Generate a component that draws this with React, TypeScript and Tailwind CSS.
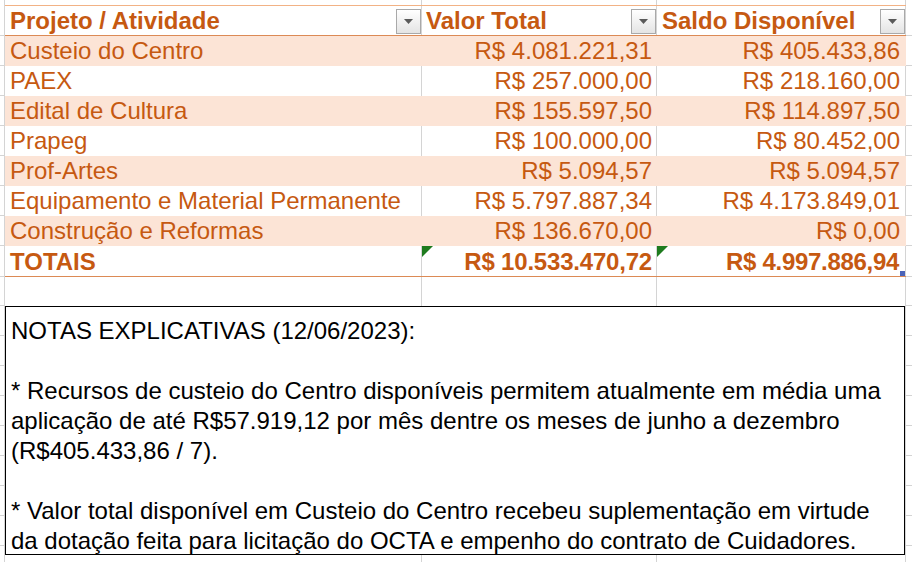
import React from "react";

const rows: [string, string, string][] = [
  ["Custeio do Centro", "R$ 4.081.221,31", "R$ 405.433,86"],
  ["PAEX", "R$ 257.000,00", "R$ 218.160,00"],
  ["Edital de Cultura", "R$ 155.597,50", "R$ 114.897,50"],
  ["Prapeg", "R$ 100.000,00", "R$ 80.452,00"],
  ["Prof-Artes", "R$ 5.094,57", "R$ 5.094,57"],
  ["Equipamento e Material Permanente", "R$ 5.797.887,34", "R$ 4.173.849,01"],
  ["Construção e Reformas", "R$ 136.670,00", "R$ 0,00"],
];

function Dropdown() {
  return (
    <div className="mt-[3px] self-start w-[25px] h-[25px] border border-[#a9a9a9] bg-linear-to-b from-white to-[#e4e4e4] flex items-center justify-center shrink-0">
      <svg width="9" height="5" viewBox="0 0 9 5">
        <path d="M0 0H9L4.5 5Z" fill="#5a5a5a" />
      </svg>
    </div>
  );
}

function GreenMark() {
  return (
    <svg className="absolute top-0 left-0" width="11" height="11" viewBox="0 0 11 11">
      <path d="M0 0H11L0 11Z" fill="#1e7b1e" />
    </svg>
  );
}

function Stubs({ n, right }: { n: number; right?: boolean }) {
  return (
    <div className={right ? "flex-1 flex flex-col" : "w-[5px] flex flex-col border-r border-[#d4d4d4]"}>
      {Array.from({ length: n }).map((_, i) => (
        <div key={i} className="h-[30px] shrink-0 border-b border-[#d4d4d4]" />
      ))}
    </div>
  );
}

export default function App() {
  return (
    <div className="w-[912px] h-[562px] bg-white overflow-hidden font-['Liberation_Sans',Arial,sans-serif] text-[24px]">
      {/* top strip */}
      <div className="flex h-[5px]">
        <div className="w-[5px] border-r border-[#d4d4d4]" />
        <div className="w-[417px] border-r border-[#d4d4d4]" />
        <div className="w-[235px] border-r border-[#d4d4d4]" />
        <div className="w-[249px] border-r border-[#d4d4d4]" />
        <div className="flex-1" />
      </div>

      {/* header */}
      <div className="flex h-[31px]">
        <div className="w-[5px] border-r border-b border-[#d4d4d4]" />
        <div className="flex w-[901px] border-y border-t-[#f2b285] border-b-[#dc8a55] text-[#c65911] font-bold">
          <div className="w-[417px] flex border-r border-[#d4d4d4] pl-[5px]">
            <span className="leading-[30px] whitespace-nowrap">Projeto / Atividade</span>
            <div className="ml-auto flex">
              <Dropdown />
            </div>
          </div>
          <div className="w-[235px] flex border-r border-[#d4d4d4] pl-[4px]">
            <span className="leading-[30px] whitespace-nowrap">Valor Total</span>
            <div className="ml-auto flex">
              <Dropdown />
            </div>
          </div>
          <div className="w-[249px] flex border-r border-[#d4d4d4] pl-[5px]">
            <span className="leading-[30px] whitespace-nowrap">Saldo Disponível</span>
            <div className="ml-auto flex">
              <Dropdown />
            </div>
          </div>
        </div>
        <div className="flex-1 border-b border-[#d4d4d4]" />
      </div>

      {/* data rows */}
      {rows.map(([a, b, c], i) => {
        const band = i % 2 === 0;
        const cell = band ? "bg-[#fce4d6] border-r border-[#fce4d6]" : "border-r border-[#d4d4d4]";
        return (
          <div key={a} className="flex h-[30px] text-[#c65911]">
            <div className="w-[5px] border-r border-b border-[#d4d4d4]" />
            <div className={`w-[417px] pl-[5px] leading-[30px] whitespace-nowrap ${cell}`}>{a}</div>
            <div className={`w-[235px] pr-[4px] text-right leading-[30px] whitespace-nowrap ${cell}`}>{b}</div>
            <div className={`w-[249px] pr-[5px] text-right leading-[30px] whitespace-nowrap ${cell}`}>{c}</div>
            <div className="flex-1 border-b border-[#d4d4d4]" />
          </div>
        );
      })}

      {/* totals */}
      <div className="flex h-[31px] text-[#c65911] font-bold">
        <div className="w-[5px] border-r border-b border-[#d4d4d4]" />
        <div className="flex w-[901px] border-b border-[#dc8a55]">
          <div className="w-[417px] pl-[5px] leading-[31px] border-r border-[#d4d4d4]">TOTAIS</div>
          <div className="relative w-[235px] pr-[4px] text-right leading-[31px] whitespace-nowrap tracking-[-0.2px] border-r border-[#d4d4d4]">
            <GreenMark />
            R$ 10.533.470,72
          </div>
          <div className="relative w-[249px] pr-[6px] text-right leading-[31px] whitespace-nowrap tracking-[-0.3px] border-r border-[#d4d4d4]">
            <GreenMark />
            R$ 4.997.886,94
            <div className="absolute bottom-0 right-0 w-[5px] h-[5px] bg-[#4a63b8]" />
          </div>
        </div>
        <div className="flex-1 border-b border-[#d4d4d4]" />
      </div>

      {/* empty row */}
      <div className="flex h-[29px]">
        <div className="w-[5px] border-r border-b border-[#d4d4d4]" />
        <div className="w-[417px] border-r border-[#d4d4d4]" />
        <div className="w-[235px] border-r border-[#d4d4d4]" />
        <div className="w-[249px] border-r border-[#d4d4d4]" />
        <div className="flex-1 border-b border-[#d4d4d4]" />
      </div>

      {/* notes */}
      <div className="flex h-[249px] overflow-visible">
        <Stubs n={9} />
        <div className="relative z-10 w-[900px] h-[249px] shrink-0 border border-black bg-white pl-[5px] pt-[9px] text-black leading-[30px]">
          <div className="whitespace-nowrap">NOTAS EXPLICATIVAS (12/06/2023):</div>
          <div className="h-[30px]" />
          <div className="whitespace-nowrap">* Recursos de custeio do Centro disponíveis permitem atualmente em média uma</div>
          <div className="whitespace-nowrap">aplicação de até R$57.919,12 por mês dentre os meses de junho a dezembro</div>
          <div className="whitespace-nowrap">(R$405.433,86 / 7).</div>
          <div className="h-[30px]" />
          <div className="whitespace-nowrap">* Valor total disponível em Custeio do Centro recebeu suplementação em virtude</div>
          <div className="whitespace-nowrap">da dotação feita para licitação do OCTA e empenho do contrato de Cuidadores.</div>
        </div>
        <div className="w-[1px] bg-[#d4d4d4]" />
        <Stubs n={9} right />
      </div>

      {/* below notes */}
      <div className="flex h-[20px]">
        <div className="w-[5px] border-r border-[#d4d4d4]" />
        <div className="w-[417px] border-r border-[#d4d4d4]" />
        <div className="w-[235px] border-r border-[#d4d4d4]" />
        <div className="w-[249px] border-r border-[#d4d4d4]" />
        <div className="flex-1" />
      </div>
    </div>
  );
}
